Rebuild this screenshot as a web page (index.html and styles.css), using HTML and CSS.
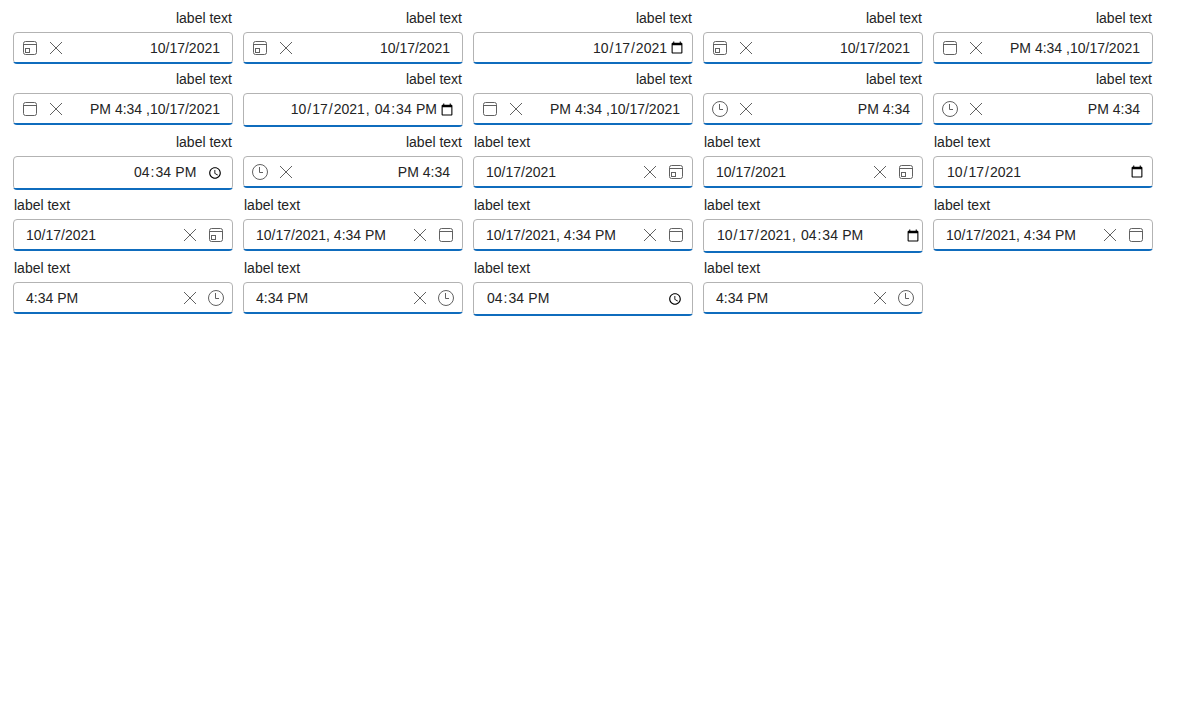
FILE: index.html
```
<!DOCTYPE html>
<html lang="en-US">
<head>
<meta charset="utf-8">
<title>Date fields</title>
<link rel="stylesheet" href="styles.css">
</head>
<body>
<svg class="sprite" aria-hidden="true">
  <symbol id="close" viewBox="0 0 16 16"><path d="M2 2l12 12M14 2L2 14"/></symbol>
  <symbol id="month" viewBox="0 0 16 16"><rect x="1.5" y="1.5" width="13" height="13" rx="2"/><path d="M1.5 4.5h13"/></symbol>
  <symbol id="day" viewBox="0 0 16 16"><rect x="1.5" y="1.5" width="13" height="13" rx="2"/><path d="M1.5 4.5h13"/><rect x="3.5" y="8.5" width="4" height="4"/></symbol>
  <symbol id="clock" viewBox="0 0 16 16"><circle cx="8" cy="8" r="7.5"/><path d="M7.5 3v5.5H11"/></symbol>
</svg>
<main class="fields" id="fields"></main>
<script src="fields.js"></script>
</body>
</html>
```
FILE: fields.js
```
const date = { icon: 'day', text: '10/17/2021', type: 'date', value: '2021-10-17' };
const dateTime = { icon: 'month', text: '10/17/2021, 4:34 PM', type: 'datetime-local', value: '2021-10-17T16:34' };
const time = { icon: 'clock', text: '4:34 PM', type: 'time', value: '16:34' };

const icon = id => `<span class="button"><svg class="icon"><use href="#${id}"/></svg></span>`;

function field(kind, dir, native) {
  const body = native
    ? `<input class="native ${kind.type}" type="${kind.type}" value="${kind.value}">`
    : `<span class="value">${kind.text}</span>${icon('close')}${icon(kind.icon)}`;
  return `<div class="field ${dir}" dir="${dir}"><div class="label">label text</div><div class="box">${body}</div></div>`;
}

let html = '';
for (const dir of ['rtl', 'ltr'])
  for (const kind of [date, dateTime, time])
    for (const native of [false, false, true, false])
      html += field(kind, dir, native);
document.getElementById('fields').innerHTML = html;
```
FILE: styles.css
```
body {
  margin: 0;
  background: #fff;
  color: #242424;
  font: 14px/16px "Liberation Sans", Arial, sans-serif;
}
.sprite { display: none; }
.fields {
  display: grid;
  grid-template-columns: repeat(5, 220px);
  gap: 10px;
  padding: 13px;
  align-items: start;
}
.label {
  height: 19px;
  line-height: 11px;
  padding: 0 1px;
}
.box {
  position: relative;
  display: flex;
  align-items: center;
  box-sizing: border-box;
  min-height: 32px;
  border: 1px solid #b3b3b3;
  border-radius: 4px;
}
.box::after {
  content: "";
  position: absolute;
  left: -1px;
  right: -1px;
  bottom: -1px;
  height: 4px;
  box-sizing: border-box;
  border-bottom: 2px solid #0f6cbd;
  border-radius: 0 0 4px 4px;
  clip-path: inset(calc(100% - 2px) 0 0 0);
}
.value {
  flex: 1;
  padding-inline-start: 12px;
  white-space: nowrap;
}
.button {
  display: flex;
  justify-content: center;
  width: 26px;
}
.button:last-child { margin-inline-end: 3px; }
.icon {
  width: 16px;
  height: 16px;
  fill: none;
  stroke: #616161;
  stroke-width: 1;
}
.native {
  flex: 1;
  min-width: 0;
  box-sizing: border-box;
  margin: 0;
  padding: 0 6px 0 12px;
  border: 0;
  outline: 0;
  background: transparent;
  color: inherit;
  font: inherit;
}
.datetime-local,
.time { height: 32px; }
.datetime-local::-webkit-datetime-edit,
.time::-webkit-datetime-edit { padding-bottom: 3px; }
.native::-webkit-datetime-edit-ampm-field { margin-left: -0.5px; }
.ltr .datetime-local { padding-right: 0; }
.rtl .native { text-align: right; }
.rtl .native::-webkit-datetime-edit { text-align: right; }
.rtl .native::-webkit-calendar-picker-indicator { margin-left: 0; }
.rtl .time::-webkit-calendar-picker-indicator { margin-left: 8px; }
```
